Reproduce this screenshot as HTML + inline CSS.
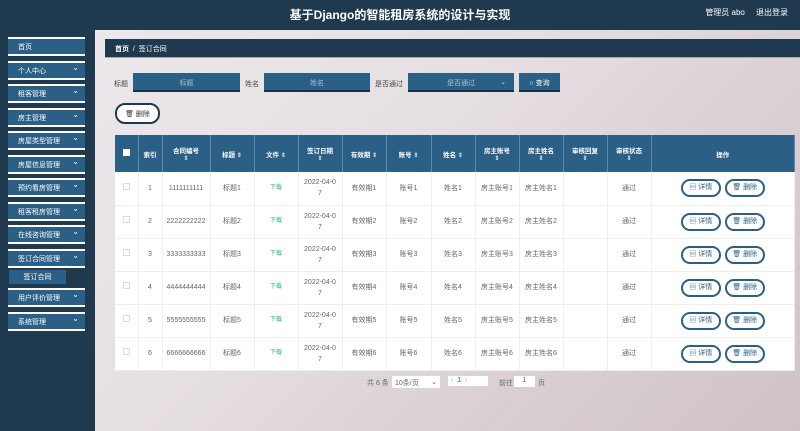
<!DOCTYPE html>
<html><head><meta charset="utf-8"><style>
*{margin:0;padding:0;box-sizing:border-box}
body{width:800px;height:431px;overflow:hidden;font-family:"Liberation Sans","Noto Sans CJK SC",sans-serif;font-size:7px;color:#555;background:#e6e3e6;position:relative}
.hdr{position:absolute;left:0;top:0;width:800px;height:30px;background:#1f3a4e;color:#fff}
.hdr .t{position:absolute;left:0;width:800px;text-align:center;top:6px;font-size:12px;font-weight:bold}
.hdr .r{position:absolute;right:12px;top:7px;font-size:8px}
.side{position:absolute;left:0;top:30px;width:95px;height:401px;background:#1f3a4e}
.mi{position:absolute;left:8px;width:77px;height:19px;background:#2c5f85;border-top:2px solid #fff;border-bottom:2px solid #fff;color:#fff;font-size:7px;padding:3px 0 0 10px}
.mi:after{content:"⌄";position:absolute;right:6px;top:0px;font-size:8px}
.mi.n:after{content:""}
.sub{position:absolute;left:9px;top:270px;width:57px;height:14px;background:#2c5f85;color:#fff;text-align:center;padding-top:2px}
.main{position:absolute;left:95px;top:30px;width:705px;height:401px;background:linear-gradient(135deg,#ece8ea 0%,#e6dfe2 40%,#d9cfd4 70%,#cfc2c8 100%)}
.bc{position:absolute;left:105px;top:39px;width:695px;height:19px;background:#1f3a4e;color:#fff;padding:5px 0 0 10px;font-size:7px;border-bottom:1px solid #aaa}
.lab{position:absolute;top:79px;font-size:7px;color:#444}
.inp{position:absolute;top:73px;height:19px;background:#2c5f85;color:#a8c0d4;text-align:center;padding-top:5px;border-bottom:2px solid #1a3040}
.btn{position:absolute;background:#fff;border:2px solid #1f3a4e;border-radius:10px;color:#333;text-align:center}
table{position:absolute;left:115px;top:135px;width:680px;border-collapse:collapse;background:#fff;table-layout:fixed}
th{background:#2c5f85;color:#fff;height:37px;font-size:6.5px;border-right:1px solid #5f88a8;font-weight:bold}
td{height:33px;text-align:center;border-right:1px solid #f0f0f0;border-bottom:1px solid #eee;color:#666;font-size:7px;line-height:11px}
.cb{display:inline-block;width:7px;height:7px;border:1px solid #ddd;background:#fff}
th .cb{border:none}
.dl{color:#2bb38a;font-size:6px}
.ob{display:inline-block;width:40px;height:18px;border:2.5px solid #2c5f85;border-radius:10px;color:#2c5f85;line-height:13px;margin:0 2px;font-size:7px}
.s{font-size:6px;color:#cde}
.pg{position:absolute;top:377px;font-size:7px;color:#666}
</style></head><body>
<div class="hdr"><div class="t">基于Django的智能租房系统的设计与实现</div><div class="r">管理员 abo &nbsp;&nbsp;&nbsp; 退出登录</div></div>
<div class="side">
<div class="mi n" style="top:7px">首页</div>
<div class="mi" style="top:31px">个人中心</div>
<div class="mi" style="top:54px">租客管理</div>
<div class="mi" style="top:78px">房主管理</div>
<div class="mi" style="top:101px">房屋类型管理</div>
<div class="mi" style="top:125px">房屋信息管理</div>
<div class="mi" style="top:148px">预约看房管理</div>
<div class="mi" style="top:172px">租客租房管理</div>
<div class="mi" style="top:195px">在线咨询管理</div>
<div class="mi" style="top:219px">签订合同管理</div>
<div class="mi" style="top:258px">用户评价管理</div>
<div class="mi" style="top:282px">系统管理</div>
</div>
<div class="sub">签订合同</div>
<div class="main"></div>
<div class="bc"><b>首页</b> &nbsp;/&nbsp; 签订合同</div>
<div class="lab" style="left:114px">标题</div>
<div class="inp" style="left:133px;width:107px">标题</div>
<div class="lab" style="left:245px">姓名</div>
<div class="inp" style="left:264px;width:106px">姓名</div>
<div class="lab" style="left:375px">是否通过</div>
<div class="inp" style="left:408px;width:106px">是否通过 <span style="position:absolute;right:8px;color:#cde">⌄</span></div>
<div class="inp" style="left:519px;width:41px;color:#fff">○ 查询</div>
<div class="btn" style="left:115px;top:103px;width:45px;height:21px;padding-top:4px">🗑 删除</div>
<table>
<colgroup><col style="width:23px"><col style="width:24px"><col style="width:48px"><col style="width:44px"><col style="width:44px"><col style="width:44px"><col style="width:44px"><col style="width:45px"><col style="width:44px"><col style="width:44px"><col style="width:44px"><col style="width:44px"><col style="width:44px"><col></colgroup>
<tr><th><span class="cb"></span></th><th>索引</th><th>合同编号<br><span class="s">⇕</span></th><th>标题 <span class="s">⇕</span></th><th>文件 <span class="s">⇕</span></th><th>签订日期<br><span class="s">⇕</span></th><th>有效期 <span class="s">⇕</span></th><th>账号 <span class="s">⇕</span></th><th>姓名 <span class="s">⇕</span></th><th>房主账号<br><span class="s">⇕</span></th><th>房主姓名<br><span class="s">⇕</span></th><th>审核回复<br><span class="s">⇕</span></th><th>审核状态<br><span class="s">⇕</span></th><th>操作</th></tr>
<tr><td><span class="cb"></span></td><td>1</td><td>1111111111</td><td>标题1</td><td class="dl">下载</td><td>2022-04-0<br>7</td><td>有效期1</td><td>账号1</td><td>姓名1</td><td>房主账号1</td><td>房主姓名1</td><td></td><td>通过</td><td><span class="ob">▤ 详情</span><span class="ob">🗑 删除</span></td></tr>
<tr><td><span class="cb"></span></td><td>2</td><td>2222222222</td><td>标题2</td><td class="dl">下载</td><td>2022-04-0<br>7</td><td>有效期2</td><td>账号2</td><td>姓名2</td><td>房主账号2</td><td>房主姓名2</td><td></td><td>通过</td><td><span class="ob">▤ 详情</span><span class="ob">🗑 删除</span></td></tr>
<tr><td><span class="cb"></span></td><td>3</td><td>3333333333</td><td>标题3</td><td class="dl">下载</td><td>2022-04-0<br>7</td><td>有效期3</td><td>账号3</td><td>姓名3</td><td>房主账号3</td><td>房主姓名3</td><td></td><td>通过</td><td><span class="ob">▤ 详情</span><span class="ob">🗑 删除</span></td></tr>
<tr><td><span class="cb"></span></td><td>4</td><td>4444444444</td><td>标题4</td><td class="dl">下载</td><td>2022-04-0<br>7</td><td>有效期4</td><td>账号4</td><td>姓名4</td><td>房主账号4</td><td>房主姓名4</td><td></td><td>通过</td><td><span class="ob">▤ 详情</span><span class="ob">🗑 删除</span></td></tr>
<tr><td><span class="cb"></span></td><td>5</td><td>5555555555</td><td>标题5</td><td class="dl">下载</td><td>2022-04-0<br>7</td><td>有效期5</td><td>账号5</td><td>姓名5</td><td>房主账号5</td><td>房主姓名5</td><td></td><td>通过</td><td><span class="ob">▤ 详情</span><span class="ob">🗑 删除</span></td></tr>
<tr><td><span class="cb"></span></td><td>6</td><td>6666666666</td><td>标题6</td><td class="dl">下载</td><td>2022-04-0<br>7</td><td>有效期6</td><td>账号6</td><td>姓名6</td><td>房主账号6</td><td>房主姓名6</td><td></td><td>通过</td><td><span class="ob">▤ 详情</span><span class="ob">🗑 删除</span></td></tr>
</table>
<div class="pg" style="left:367px;top:378px">共 6 条</div>
<div class="pg" style="left:392px;top:376px;width:48px;height:12px;background:#fff;padding:2px 3px">10条/页 <span style="float:right">⌄</span></div>
<div class="pg" style="left:448px;top:376px;width:40px;height:10px;background:#fff;padding:1px 3px;color:#aaa">‹ &nbsp;<b style="color:#2bb38a">1</b>&nbsp; ›</div>
<div class="pg" style="left:499px;top:378px">前往</div>
<div class="pg" style="left:514px;top:376px;width:21px;height:11px;background:#fff;text-align:center;padding-top:1px">1</div>
<div class="pg" style="left:538px;top:378px">页</div>
</body></html>
